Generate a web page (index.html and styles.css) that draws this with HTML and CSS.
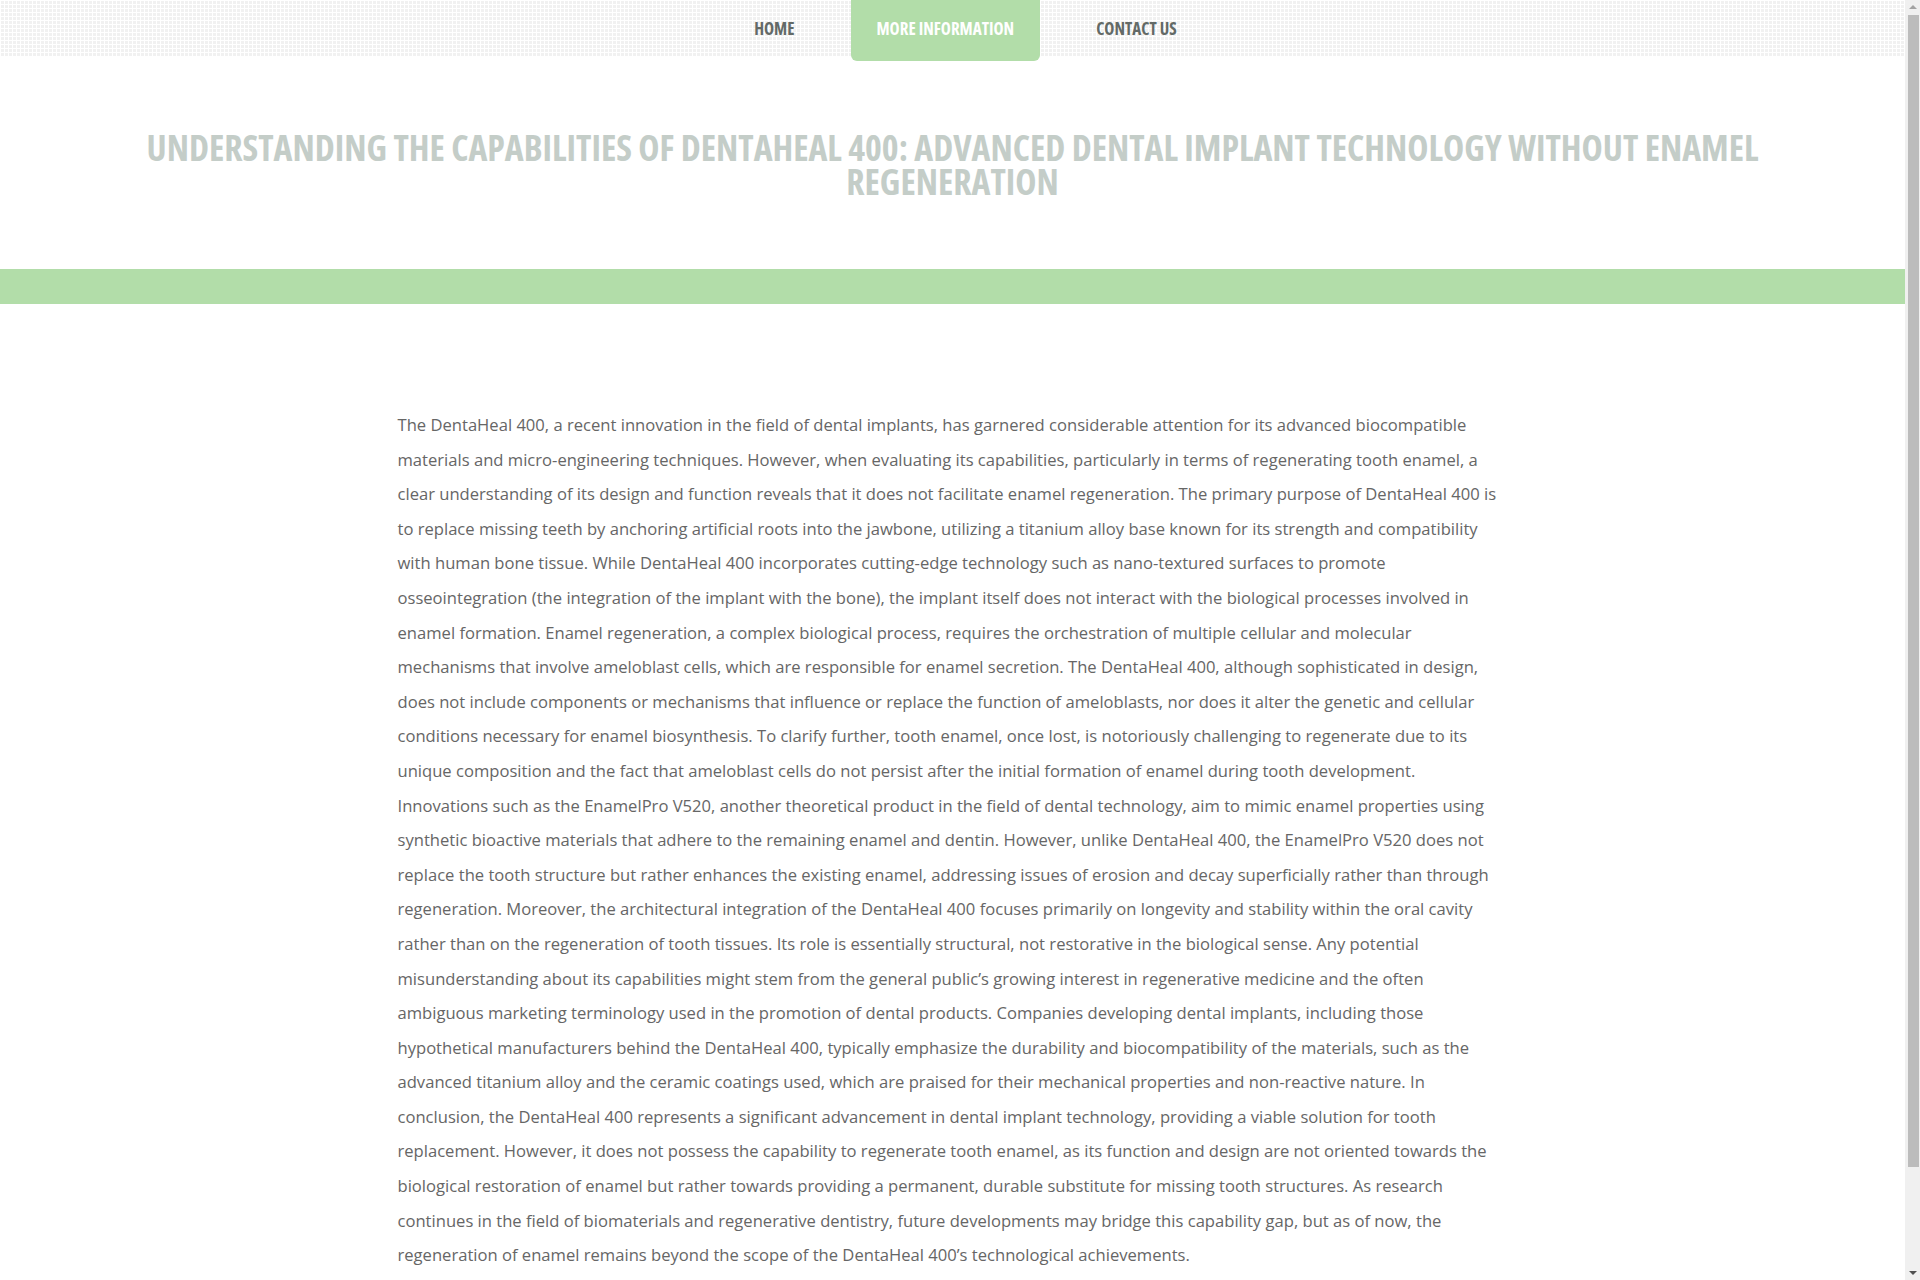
FILE: index.html
```html
<!DOCTYPE html>
<html lang="en">
<head>
<meta charset="utf-8">
<title>DentaHeal 400</title>
<link rel="stylesheet" href="styles.css">
</head>
<body>
<header class="topbar">
  <nav class="menu">
    <a class="menu-item" href="#">HOME</a>
    <a class="menu-item active" href="#">MORE INFORMATION</a>
    <a class="menu-item" href="#">CONTACT US</a>
  </nav>
</header>
<h1 class="title">UNDERSTANDING THE CAPABILITIES OF DENTAHEAL 400: ADVANCED DENTAL IMPLANT TECHNOLOGY WITHOUT ENAMEL REGENERATION</h1>
<div class="band"></div>
<main class="content">
  <p>The DentaHeal 400, a recent innovation in the field of dental implants, has garnered considerable attention for its advanced biocompatible materials and micro-engineering techniques. However, when evaluating its capabilities, particularly in terms of regenerating tooth enamel, a clear understanding of its design and function reveals that it does not facilitate enamel regeneration. The primary purpose of DentaHeal 400 is to replace missing teeth by anchoring artificial roots into the jawbone, utilizing a titanium alloy base known for its strength and compatibility with human bone tissue. While DentaHeal 400 incorporates cutting-edge technology such as nano-textured surfaces to promote osseointegration (the integration of the implant with the bone), the implant itself does not interact with the biological processes involved in enamel formation. Enamel regeneration, a complex biological process, requires the orchestration of multiple cellular and molecular mechanisms that involve ameloblast cells, which are responsible for enamel secretion. The DentaHeal 400, although sophisticated in design, does not include components or mechanisms that influence or replace the function of ameloblasts, nor does it alter the genetic and cellular conditions necessary for enamel biosynthesis. To clarify further, tooth enamel, once lost, is notoriously challenging to regenerate due to its unique composition and the fact that ameloblast cells do not persist after the initial formation of enamel during tooth development. Innovations such as the EnamelPro V520, another theoretical product in the field of dental technology, aim to mimic enamel properties using synthetic bioactive materials that adhere to the remaining enamel and dentin. However, unlike DentaHeal 400, the EnamelPro V520 does not replace the tooth structure but rather enhances the existing enamel, addressing issues of erosion and decay superficially rather than through regeneration. Moreover, the architectural integration of the DentaHeal 400 focuses primarily on longevity and stability within the oral cavity rather than on the regeneration of tooth tissues. Its role is essentially structural, not restorative in the biological sense. Any potential misunderstanding about its capabilities might stem from the general public’s growing interest in regenerative medicine and the often ambiguous marketing terminology used in the promotion of dental products. Companies developing dental implants, including those hypothetical manufacturers behind the DentaHeal 400, typically emphasize the durability and biocompatibility of the materials, such as the advanced titanium alloy and the ceramic coatings used, which are praised for their mechanical properties and non-reactive nature. In conclusion, the DentaHeal 400 represents a significant advancement in dental implant technology, providing a viable solution for tooth replacement. However, it does not possess the capability to regenerate tooth enamel, as its function and design are not oriented towards the biological restoration of enamel but rather towards providing a permanent, durable substitute for missing tooth structures. As research continues in the field of biomaterials and regenerative dentistry, future developments may bridge this capability gap, but as of now, the regeneration of enamel remains beyond the scope of the DentaHeal 400’s technological achievements.</p>
</main>
<div class="scrollbar" aria-hidden="true">
  <span class="sb-btn"><span class="sb-arrow up"></span></span>
  <span class="sb-thumb"></span>
  <span class="sb-rest"></span>
  <span class="sb-btn"><span class="sb-arrow down"></span></span>
</div>
</body>
</html>
```
FILE: styles.css
```css
html, body {
  margin: 0;
  padding: 0;
}
body {
  background: #ffffff;
  font-family: "Open Sans", "Liberation Sans", sans-serif;
  color: #666666;
  margin-right: 15px;
}
.topbar {
  height: 56px;
  background-color: #f1f1f1;
  background-image:
    linear-gradient(90deg, #ffffff 1px, transparent 1px),
    linear-gradient(#ffffff 1px, transparent 1px);
  background-size: 4px 4px;
}
.menu {
  display: flex;
  justify-content: center;
  align-items: flex-start;
  gap: 30px;
  padding-left: 26px;
}
.menu-item {
  display: block;
  padding: 0 26px;
  height: 57px;
  line-height: 57px;
  font-family: "Open Sans", sans-serif;
  font-stretch: 75%;
  font-weight: 700;
  font-size: 17px;
  color: #636a67;
  text-decoration: none;
  white-space: nowrap;
}
.menu-item.active {
  height: 61px;
  background: #b2dda9;
  color: #ffffff;
  border-radius: 0 0 6px 6px;
}
.title {
  margin: 74px 120px 0;
  font-family: "Open Sans", sans-serif;
  font-stretch: 75%;
  font-weight: 700;
  font-size: 35.8px;
  line-height: 34px;
  text-align: center;
  color: #c4cdc8;
}
.band {
  margin-top: 71px;
  height: 35px;
  background: #b2dda9;
}
.content {
  max-width: 1110px;
  margin: 104px auto 0;
  padding-bottom: 110px;
}
.content p {
  margin: 0;
  font-size: 16.6px;
  line-height: 34.6px;
  color: #666666;
}
.scrollbar {
  position: fixed;
  top: 0;
  right: 0;
  bottom: 0;
  width: 15px;
  background: #f0f0f0;
  display: flex;
  flex-direction: column;
  align-items: center;
}
.sb-btn {
  flex: 0 0 15px;
  width: 15px;
  display: flex;
  align-items: center;
  justify-content: center;
}
.sb-arrow {
  width: 0;
  height: 0;
  border-left: 4px solid transparent;
  border-right: 4px solid transparent;
}
.sb-arrow.up {
  border-bottom: 4px solid #a3a3a3;
  margin-top: -1px;
}
.sb-arrow.down {
  border-top: 4px solid #505050;
  margin-top: 1px;
}
.sb-thumb {
  flex: 0 0 1152px;
  width: 11px;
  margin-left: 2px;
  background: #bcbcbc;
}
.sb-rest {
  flex: 1;
}
```
